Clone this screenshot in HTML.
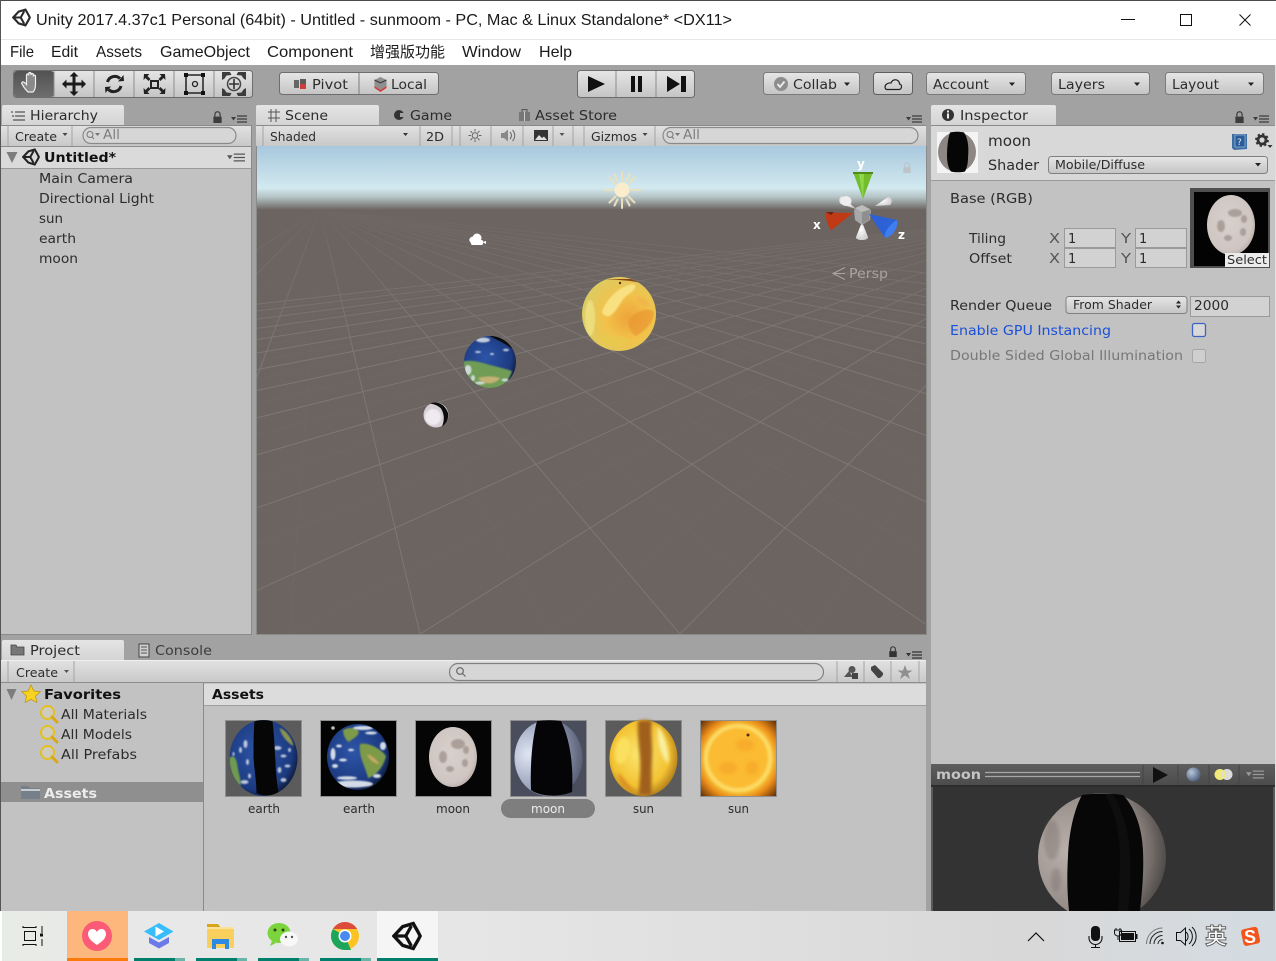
<!DOCTYPE html>
<html><head><meta charset="utf-8"><title>Unity</title>
<style>
html,body{margin:0;padding:0;background:#a2a2a2;overflow:hidden}
svg{display:block;position:absolute;left:0;top:0}
svg.root{filter:blur(.35px)}
text{font-family:"DejaVu Sans","Liberation Sans",sans-serif;font-size:13px;fill:#2c2c2c;white-space:pre}
.w{font-family:"Liberation Sans","Noto Sans CJK SC",sans-serif;font-size:16px;fill:#1a1a1a}
.s{font-size:12px}
.b{font-weight:bold;fill:#111}
.g{fill:#7e7e7e}
</style></head><body>
<svg class="root" width="1276" height="961" viewBox="0 0 1276 961" xmlns="http://www.w3.org/2000/svg">
<defs>
<linearGradient id="btn" x1="0" y1="0" x2="0" y2="1"><stop offset="0" stop-color="#e6e6e6"/><stop offset="1" stop-color="#c4c4c4"/></linearGradient>
<linearGradient id="sel" x1="0" y1="0" x2="0" y2="1"><stop offset="0" stop-color="#525252"/><stop offset="1" stop-color="#6e6e6e"/></linearGradient>
<linearGradient id="bar" x1="0" y1="0" x2="0" y2="1"><stop offset="0" stop-color="#e2e2e2"/><stop offset="1" stop-color="#c8c8c8"/></linearGradient>
<linearGradient id="tab" x1="0" y1="0" x2="0" y2="1"><stop offset="0" stop-color="#e4e4e4"/><stop offset="1" stop-color="#d4d4d4"/></linearGradient>
<linearGradient id="sky" x1="0" y1="0" x2="0" y2="1"><stop offset="0" stop-color="#a8c8de"/><stop offset=".66" stop-color="#d2e9ef"/><stop offset=".8" stop-color="#b4c2c4"/><stop offset="1" stop-color="#6b6461"/></linearGradient>
<linearGradient id="task" x1="0" y1="0" x2="1" y2="0"><stop offset="0" stop-color="#e8ece6"/><stop offset=".1" stop-color="#e8e8e8"/><stop offset=".36" stop-color="#e6e6e6"/><stop offset=".8" stop-color="#d8d8d8"/><stop offset="1" stop-color="#d4dce2"/></linearGradient>
<linearGradient id="prevh" x1="0" y1="0" x2="0" y2="1"><stop offset="0" stop-color="#5e5e5e"/><stop offset="1" stop-color="#4c4c4c"/></linearGradient>
<linearGradient id="fade" gradientUnits="userSpaceOnUse" x1="0" y1="212" x2="0" y2="340"><stop offset="0" stop-color="#222"/><stop offset=".3" stop-color="#777"/><stop offset="1" stop-color="#fff"/></linearGradient>
<mask id="fm" maskUnits="userSpaceOnUse" x="257" y="209" width="669" height="425"><rect x="257" y="209" width="669" height="425" fill="url(#fade)"/></mask>
<radialGradient id="gEarth" cx=".42" cy=".42" r=".62"><stop offset="0" stop-color="#2e55a8"/><stop offset=".8" stop-color="#1c3a80"/><stop offset="1" stop-color="#0e1c3e"/></radialGradient>
<radialGradient id="gSun" cx=".62" cy=".55" r=".62"><stop offset="0" stop-color="#eea43a"/><stop offset=".5" stop-color="#f2c24a"/><stop offset="1" stop-color="#dccb62"/></radialGradient>
<radialGradient id="gSunMat" cx=".45" cy=".45" r=".6"><stop offset="0" stop-color="#fbe870"/><stop offset=".7" stop-color="#f3c232"/><stop offset="1" stop-color="#a87418"/></radialGradient>
<radialGradient id="gSunTex" cx=".5" cy=".5" r=".72"><stop offset="0" stop-color="#fcc840"/><stop offset=".6" stop-color="#fbc83c"/><stop offset=".74" stop-color="#e88a18"/><stop offset="1" stop-color="#4a2006"/></radialGradient>
<radialGradient id="gMoon" cx=".45" cy=".45" r=".6"><stop offset="0" stop-color="#d8d0cc"/><stop offset=".8" stop-color="#cfc6c2"/><stop offset="1" stop-color="#b4aaa6"/></radialGradient>
<radialGradient id="gMoonMat" cx=".2" cy=".45" r=".85"><stop offset="0" stop-color="#dfe5f2"/><stop offset=".55" stop-color="#97a0ba"/><stop offset="1" stop-color="#50566a"/></radialGradient>
<radialGradient id="gPrev" cx=".22" cy=".45" r=".85"><stop offset="0" stop-color="#b9b0ab"/><stop offset=".7" stop-color="#8a817d"/><stop offset="1" stop-color="#3b3836"/></radialGradient>
<radialGradient id="gBall" cx=".35" cy=".35" r=".7"><stop offset="0" stop-color="#b8c6d8"/><stop offset="1" stop-color="#4d5f7c"/></radialGradient>
<radialGradient id="gCap" cx=".4" cy=".4" r=".7"><stop offset="0" stop-color="#fff"/><stop offset="1" stop-color="#c9c9c9"/></radialGradient>
<filter id="bl"><feGaussianBlur stdDeviation=".7"/></filter>
<filter id="bl2"><feGaussianBlur stdDeviation="1.6"/></filter>
<filter id="bl3"><feGaussianBlur stdDeviation=".35"/></filter>
<clipPath id="scn"><rect x="257" y="209" width="669" height="425"/></clipPath>
<clipPath id="prv"><rect x="933" y="787" width="340" height="124"/></clipPath>
<clipPath id="cE"><ellipse cx="38" cy="38" rx="34" ry="38"/></clipPath>
<clipPath id="cEt"><ellipse cx="37" cy="37" rx="31" ry="33"/></clipPath>
<clipPath id="cS"><circle cx="619" cy="314" r="37"/></clipPath>
<clipPath id="cEs"><circle cx="490" cy="362" r="26"/></clipPath>
<symbol id="unity" viewBox="0 0 24 24"><path d="M1.500 12 8.500 4.500 17 2 21 9 22.500 12 21 15 17 22 8.500 19.500Z" fill="none" stroke="currentColor" stroke-width="2.700" stroke-linejoin="miter"/><path d="M2 12H11L15.500 4M11 12l4.500 8" fill="none" stroke="currentColor" stroke-width="2.600"/></symbol>
<symbol id="lock" viewBox="0 0 12 14"><path d="M3.200 6V3.500a2.800 2.800 0 0 1 5.600 0V6" fill="none" stroke="currentColor" stroke-width="1.300"/><rect x="1.500" y="6" width="9" height="7" fill="currentColor"/></symbol>
<symbol id="menu" viewBox="0 0 16 8"><path d="M0 2h5L2.500 5.500Z" fill="currentColor"/><path d="M6 1h10M6 4h10M6 7h10" stroke="currentColor" stroke-width="1.200"/></symbol>
<symbol id="mag" viewBox="0 0 20 20"><circle cx="8.500" cy="8.500" r="6.500" fill="#e8e0b8" fill-opacity=".35" stroke="#e2c020" stroke-width="2"/><path d="M13 13l5 5" stroke="#d8a818" stroke-width="3" stroke-linecap="round"/></symbol>
</defs>

<!-- window -->
<rect width="1276" height="961" fill="#a2a2a2"/>
<rect x="0" y="0" width="1276" height="65" fill="#fff"/>
<rect x="0" y="0" width="1276" height="1" fill="#4a4a4a"/>
<rect x="0" y="39" width="1276" height="1" fill="#e6e6e6"/>
<rect x="0" y="0" width="1" height="911" fill="#555"/>
<rect x="1275" y="65" width="1" height="846" fill="#e0e0e0"/>
<svg x="12" y="8" width="19" height="19" color="#2a2a2a"><use href="#unity" width="19" height="19"/></svg>
<text class="w" x="36" y="25" textLength="696" lengthAdjust="spacingAndGlyphs">Unity 2017.4.37c1 Personal (64bit) - Untitled - sunmoom - PC, Mac &amp; Linux Standalone* &lt;DX11&gt;</text>
<path d="M1121 19.500h14" stroke="#111" stroke-width="1"/>
<rect x="1180.500" y="14.500" width="11" height="11" fill="none" stroke="#111"/>
<path d="M1239.500 14.500 1250.500 25.500M1250.500 14.500 1239.500 25.500" stroke="#111"/>
<text class="w" x="10" y="57" textLength="24" lengthAdjust="spacingAndGlyphs">File</text>
<text class="w" x="51" y="57" textLength="27" lengthAdjust="spacingAndGlyphs">Edit</text>
<text class="w" x="96" y="57" textLength="46" lengthAdjust="spacingAndGlyphs">Assets</text>
<text class="w" x="160" y="57" textLength="90" lengthAdjust="spacingAndGlyphs">GameObject</text>
<text class="w" x="267" y="57" textLength="86" lengthAdjust="spacingAndGlyphs">Component</text>
<text class="w" x="370" y="57" textLength="75" lengthAdjust="spacingAndGlyphs" style="font-size:15px">增强版功能</text>
<text class="w" x="462" y="57" textLength="59" lengthAdjust="spacingAndGlyphs">Window</text>
<text class="w" x="539" y="57" textLength="33" lengthAdjust="spacingAndGlyphs">Help</text>

<!-- tools -->
<rect x="13.500" y="70.500" width="239" height="27" rx="3" fill="url(#btn)" stroke="#6d6d6d"/>
<rect x="14" y="71" width="40" height="26" rx="3" fill="url(#sel)"/>
<path d="M94 71v26M134 71v26M174 71v26M214 71v26M54 71v26" stroke="#8c8c8c"/>
<path d="M28 92c-2-2-5-6-6-8-1-1.500 1-3 2.500-1.500l2 2v-9c0-2 2.200-2 2.200 0v-1.500c0-2 2.300-2 2.300 0v1c0-2 2.300-2 2.300 0v1.500c0-1.800 2.200-1.800 2.200 0v8c0 3-1 6-2.500 7.500z" fill="#8a8a8a" stroke="#f0f0f0" stroke-width="1.200"/>
<path d="M74 72l4.500 4.500h-3v6h6v-3l4.500 4.500-4.500 4.500v-3h-6v6h3l-4.500 4.500-4.500-4.500h3v-6h-6v3l-4.500-4.500 4.500-4.500v3h6v-6h-3z" fill="#1a1a1a"/>
<path d="M107.500 82a7.500 7.500 0 0 1 12.500-3.500M121 86a7.500 7.500 0 0 1-12.500 3.500" fill="none" stroke="#222" stroke-width="3"/><path d="M118 81.500l6-.5-.5-6zM111 86.500l-6 .5.500 6z" fill="#222"/>
<path d="M144 74h5.500l-2 2 3 3-2 2-3-3-2 2zM165 74h-5.500l2 2-3 3 2 2 3-3 2 2zM144 94h5.500l-2-2 3-3-2-2-3 3-2-2zM165 94h-5.500l2-2-3-3 2-2 3 3 2-2z" fill="#222"/><rect x="151" y="81" width="7" height="7" fill="none" stroke="#222" stroke-width="2"/>
<rect x="186" y="75" width="17" height="18" fill="none" stroke="#222" stroke-width="1.500"/><rect x="184" y="73" width="4" height="4" fill="#111"/><rect x="201" y="73" width="4" height="4" fill="#111"/><rect x="184" y="91" width="4" height="4" fill="#111"/><rect x="201" y="91" width="4" height="4" fill="#111"/><circle cx="195" cy="84" r="2.500" fill="none" stroke="#222" stroke-width="1.300"/>
<path d="M222 80v-8h8l1.500 3-5 .5-2 3zM246 80v-8h-8l-1.500 3 5 .5 2 3zM222 88v8h8l1.500-3-5-.5-2-3zM246 88v8h-8l-1.500-3 5-.5 2-3z" fill="#3c3c3c"/><circle cx="234" cy="84" r="6.500" fill="none" stroke="#444" stroke-width="1.500"/><path d="M234 79v10M229 84h10" stroke="#333" stroke-width="1.600"/>

<!-- pivot/local -->
<rect x="279.500" y="72.500" width="159" height="22" rx="3" fill="url(#btn)" stroke="#6d6d6d"/>
<path d="M359 73v21" stroke="#7c7c7c"/>
<rect x="294" y="80" width="5" height="8" fill="#666"/><rect x="300" y="79" width="6" height="10" fill="#cf3c3c"/><rect x="300" y="79" width="6" height="5" fill="#5a5a5a"/>
<text x="312" y="89" textLength="36" lengthAdjust="spacingAndGlyphs">Pivot</text>
<path d="M380.500 77l6 3v6l-6 4-6-4v-6z" fill="#8f8f8f"/><path d="M374.500 86l6 4 6-4v2l-6 4-6-4z" fill="#cc3c3c"/><path d="M374.500 80l6 3 6-3" fill="none" stroke="#333"/>
<text x="391" y="89" textLength="36" lengthAdjust="spacingAndGlyphs">Local</text>

<!-- play -->
<rect x="577.500" y="70.500" width="117" height="27" rx="3" fill="url(#btn)" stroke="#6d6d6d"/>
<path d="M616 71v26M656 71v26" stroke="#8c8c8c"/>
<path d="M588 76l17 8-17 8z" fill="#111"/>
<rect x="631" y="76" width="4" height="16" fill="#111"/><rect x="638" y="76" width="4" height="16" fill="#111"/>
<path d="M667 76l13 8-13 8z" fill="#111"/><rect x="681" y="76" width="5" height="16" fill="#111"/>

<!-- right buttons -->
<rect x="763.500" y="72.500" width="96" height="22" rx="3" fill="url(#btn)" stroke="#7a7a7a"/>
<circle cx="781" cy="84" r="7" fill="#8d8d8d"/><path d="M777.500 84l2.500 3 4.500-5.500" fill="none" stroke="#eee" stroke-width="1.800"/>
<text x="793" y="89" textLength="44" lengthAdjust="spacingAndGlyphs">Collab</text><path d="M844 82.500h6l-3 3.500z" fill="#222"/>
<rect x="873.500" y="72.500" width="39" height="22" rx="3" fill="url(#btn)" stroke="#5f5f5f"/>
<path d="M887 89.500h12c3 0 3.500-5 .5-5.500 0-3-3-5-5.500-4-2 .5-2.500 2-3 3-3-.5-6 1.500-6 4 .2 1.500 1 2.500 2 2.500z" fill="none" stroke="#222" stroke-width="1.200"/>
<rect x="926.500" y="72.500" width="99" height="22" rx="3" fill="url(#btn)" stroke="#7a7a7a"/>
<text x="933" y="89" textLength="56" lengthAdjust="spacingAndGlyphs">Account</text><path d="M1009 82.500h6l-3 3.500z" fill="#222"/>
<rect x="1051.500" y="72.500" width="98" height="22" rx="3" fill="url(#btn)" stroke="#7a7a7a"/>
<text x="1058" y="89" textLength="47" lengthAdjust="spacingAndGlyphs">Layers</text><path d="M1134 82.500h6l-3 3.500z" fill="#222"/>
<rect x="1165.500" y="72.500" width="98" height="22" rx="3" fill="url(#btn)" stroke="#7a7a7a"/>
<text x="1172" y="89" textLength="47" lengthAdjust="spacingAndGlyphs">Layout</text><path d="M1248 82.500h6l-3 3.500z" fill="#222"/>

<!-- hierarchy -->
<rect x="1" y="125" width="250" height="509" fill="#c2c2c2"/>
<rect x="251" y="125" width="1" height="509" fill="#8a8a8a"/>
<rect x="1" y="634" width="251" height="1" fill="#8a8a8a"/>
<path d="M2 125v-18a2 2 0 0 1 2-2h118a2 2 0 0 1 2 2v18z" fill="url(#tab)"/>
<g stroke="#333" stroke-width="1"><path d="M15 112h10M15 116h10M15 120h10"/><path d="M11 112h2M12 116h2M13 120h2"/></g>
<text x="30" y="120" textLength="68" lengthAdjust="spacingAndGlyphs">Hierarchy</text>
<svg x="212" y="111" width="11" height="13" color="#3c3c3c"><use href="#lock" width="11" height="13"/></svg>
<svg x="231" y="115" width="16" height="8" color="#3c3c3c"><use href="#menu" width="16" height="8"/></svg>
<rect x="1" y="125" width="250" height="21" fill="url(#bar)"/><rect x="1" y="125" width="250" height="1" fill="#8a8a8a"/><rect x="1" y="146" width="250" height="1" fill="#8d8d8d"/>
<path d="M8 126v20M72 126v20" stroke="#a4a4a4"/>
<text class="s" x="15" y="141" textLength="42" lengthAdjust="spacingAndGlyphs">Create</text><path d="M62.500 133h5l-2.500 3z" fill="#444"/>
<rect x="83" y="127.500" width="153" height="16" rx="8" fill="#d6d6d6" stroke="#8a8a8a" stroke-width="1.200"/>
<circle cx="90" cy="134.500" r="3" fill="none" stroke="#777"/><path d="M92 137l2 2" stroke="#777"/><path d="M95 133h5l-2.500 3z" fill="#777"/>
<text class="g" x="103" y="139" textLength="17" lengthAdjust="spacingAndGlyphs">All</text>
<rect x="1" y="147" width="250" height="21" fill="#dadada"/><rect x="1" y="168" width="250" height="1" fill="#9a9a9a"/>
<path d="M6.500 152h11l-5.500 11z" fill="#7d7d7d"/>
<svg x="22" y="148" width="18" height="18" color="#222"><use href="#unity" width="18" height="18"/></svg>
<text class="b" x="44" y="162" textLength="72" lengthAdjust="spacingAndGlyphs">Untitled*</text>
<svg x="227" y="153" width="18" height="9" color="#555"><use href="#menu" width="18" height="9"/></svg>
<text x="39" y="183" textLength="94" lengthAdjust="spacingAndGlyphs">Main Camera</text>
<text x="39" y="203" textLength="115" lengthAdjust="spacingAndGlyphs">Directional Light</text>
<text x="39" y="223" textLength="24" lengthAdjust="spacingAndGlyphs">sun</text>
<text x="39" y="243" textLength="37" lengthAdjust="spacingAndGlyphs">earth</text>
<text x="39" y="263" textLength="39" lengthAdjust="spacingAndGlyphs">moon</text>

<!-- scene tabs -->
<path d="M256 125v-18a2 2 0 0 1 2-2h119a2 2 0 0 1 2 2v18z" fill="url(#tab)"/>
<path d="M271 109v13M276 109v13M268 112h12M268 118h12" stroke="#555" stroke-width="1"/>
<text x="285" y="120" textLength="43" lengthAdjust="spacingAndGlyphs">Scene</text>
<circle cx="399" cy="115" r="5" fill="#333"/><path d="M400 113h5v4h-5z" fill="#a2a2a2"/>
<text x="410" y="120" textLength="42" lengthAdjust="spacingAndGlyphs">Game</text>
<rect x="519" y="112" width="11" height="9" fill="#777"/><path d="M522 112v-2.500h5v2.500" fill="none" stroke="#555"/><rect x="524" y="112" width="1" height="9" fill="#ccc"/>
<text x="535" y="120" textLength="82" lengthAdjust="spacingAndGlyphs">Asset Store</text>
<svg x="906" y="115" width="16" height="8" color="#3c3c3c"><use href="#menu" width="16" height="8"/></svg>

<rect x="256" y="125" width="670" height="21" fill="url(#bar)"/><rect x="256" y="125" width="670" height="1" fill="#8a8a8a"/>
<path d="M263 126v20M420 126v20M452 126v20M460 126v20M491 126v20M523 126v20M553 126v20M573 126v20M584 126v20M655 126v20" stroke="#a4a4a4"/>
<text class="s" x="270" y="141" textLength="46" lengthAdjust="spacingAndGlyphs">Shaded</text><path d="M403 133h5l-2.500 3z" fill="#333"/>
<text class="s" x="426" y="141" textLength="18" lengthAdjust="spacingAndGlyphs">2D</text>
<circle cx="475" cy="135.500" r="2.800" fill="none" stroke="#666"/><path d="M475 129v2.500M475 139.500v2.500M468.500 135.500h2.500M479 135.500h2.500M470.500 131l1.800 1.800M477.700 138.300l1.800 1.800M479.500 131l-1.800 1.800M472.300 138.300l-1.800 1.800" stroke="#666"/>
<path d="M501 133h3l4-3.500v12L504 138h-3z" fill="#888"/><path d="M510 132a5 5 0 0 1 0 7M512.500 130a8 8 0 0 1 0 11" fill="none" stroke="#666"/>
<rect x="534" y="130" width="14" height="11" fill="#333"/><path d="M535 140l4-5 3 3 2-1.500 3 3.500z" fill="#ddd"/><path d="M559.500 133h5l-2.500 3z" fill="#555"/>
<text class="s" x="591" y="141" textLength="46" lengthAdjust="spacingAndGlyphs">Gizmos</text><path d="M642.500 133h5l-2.500 3z" fill="#444"/>
<rect x="663" y="127.500" width="255" height="16" rx="8" fill="#d6d6d6" stroke="#8a8a8a" stroke-width="1.200"/>
<circle cx="670" cy="134.500" r="3" fill="none" stroke="#777"/><path d="M672 137l2 2" stroke="#777"/><path d="M675 133h5l-2.500 3z" fill="#777"/>
<text class="g" x="683" y="139" textLength="17" lengthAdjust="spacingAndGlyphs">All</text>

<!-- scene view -->
<rect x="257" y="146" width="669" height="488" fill="#6b6461"/>
<rect x="257" y="146" width="669" height="64" fill="url(#sky)"/>
<rect x="256" y="146" width="1" height="488" fill="#8a8a8a"/>
<rect x="256" y="634" width="671" height="1" fill="#8a8a8a"/>
<rect x="926" y="146" width="1" height="489" fill="#8a8a8a"/>
<g clip-path="url(#scn)"><g mask="url(#fm)" fill="none">
<path stroke="#8a8482" stroke-width="1" opacity=".6" d="M1100 210L-2700 634M1100 210L-2440 634M1100 210L-2180 634M1100 210L-1920 634M1100 210L-1660 634M1100 210L-1400 634M1100 210L-1140 634M1100 210L-880 634M1100 210L-620 634M1100 210L-360 634M1100 210L-100 634M1100 210L160 634M1100 210L420 634M1100 210L680 634M1100 210L940 634M320 210L-360 634M320 210L-100 634M320 210L160 634M320 210L420 634M320 210L680 634M320 210L940 634M320 210L1200 634M320 210L1460 634M320 210L1720 634M320 210L1980 634M320 210L2240 634M320 210L2500 634M320 210L2760 634M320 210L3020 634M320 210L3280 634M320 210L3800 634M320 210L4400 634"/>
<path stroke="#78716e" stroke-width=".8" opacity=".35" d="M1100 210L-2570 634M1100 210L-2310 634M1100 210L-2050 634M1100 210L-1790 634M1100 210L-1530 634M1100 210L-1270 634M1100 210L-1010 634M1100 210L-750 634M1100 210L-490 634M1100 210L-230 634M1100 210L30 634M1100 210L290 634M1100 210L550 634M1100 210L810 634M320 210L-230 634M320 210L30 634M320 210L290 634M320 210L550 634M320 210L810 634M320 210L1070 634M320 210L1330 634M320 210L1590 634M320 210L1850 634M320 210L2110 634M320 210L2370 634M320 210L2630 634M320 210L2890 634M320 210L3150 634"/>
</g></g>

<!-- sun gizmo -->
<circle cx="622" cy="190" r="7.500" fill="#fbeccb"/>
<path d="M622 172v9M622 199v9M604 190h9M631 190h9M609.500 177.500l6 6M628.500 196.500l6 6M634.500 177.500l-6 6M615.500 196.500l-6 6M614.500 174.500l3 6M626.500 199.500l3 6M629.500 174.500l-3 6M617.500 199.500l-3 6" stroke="#eadfbe" stroke-width="2" stroke-linecap="round"/>
<!-- camera gizmo -->
<g fill="#fff" filter="url(#bl3)"><circle cx="477" cy="238" r="4.500"/><circle cx="472.500" cy="240" r="3.200"/><rect x="471" y="240" width="12" height="5" rx="1.500"/><path d="M482 242l4 2v-3z"/></g>
<!-- spheres -->
<circle cx="619" cy="314" r="37" fill="url(#gSun)"/>
<g clip-path="url(#cS)"><g filter="url(#bl)"><path d="M602 312c4-12 16-26 32-28 4 4-2 8-8 12-6 6-8 14-16 20-3 1-6 0-8-4z" fill="#f9e488" opacity=".9"/><path d="M630 318c6-6 18-12 24-6 0 10-8 18-18 24-6-4-10-12-6-18z" fill="#e8942e" opacity=".65"/><path d="M636 296c6 0 12 4 14 10-6 2-12-2-14-10z" fill="#f0b24a" opacity=".7"/><ellipse cx="590" cy="318" rx="5" ry="18" fill="#efe082" opacity=".85"/><path d="M600 334c10 2 20 0 30 6-8 6-20 8-28 2z" fill="#e8c94e" opacity=".8"/></g>
<path d="M605 279h28c4 1 8 2 10 5-10-4-28-4-38-5z" fill="#8a4a18"/></g><circle cx="620" cy="283" r="1.200" fill="#5a2e10"/>
<circle cx="490" cy="362" r="26" fill="url(#gEarth)"/>
<g clip-path="url(#cEs)"><g filter="url(#bl)"><path d="M462 362c8-3 18 0 28 3 8 2 16 4 22 6-3 10-10 19-22 19-14 0-26-12-28-28z" fill="#6f9c56"/><path d="M478 378c8-2 14-2 22 0-4 6-16 8-22 0z" fill="#c4b274"/></g>
<g fill="#dfe6ee" filter="url(#bl)" opacity=".85"><ellipse cx="468" cy="370" rx="3.500" ry="5"/><ellipse cx="483" cy="340" rx="7" ry="2.500"/><ellipse cx="478" cy="352" rx="3" ry="1"/><ellipse cx="492" cy="354" rx="2" ry="1"/><ellipse cx="506" cy="350" rx="3" ry="1.200"/><ellipse cx="505" cy="380" rx="3.500" ry="1.500"/><ellipse cx="480" cy="383" rx="5" ry="1.500"/><ellipse cx="473" cy="378" rx="2" ry="3"/></g>
<path d="M488 335c10-1 24 6 28 18-6-8-18-12-28-18z" fill="#0b0b0b"/></g>
<circle cx="436" cy="415" r="12.500" fill="#d6cfd6"/><circle cx="433" cy="417" r="8" fill="#efeaef" filter="url(#bl)"/>
<path d="M430 403.500c8-3 15 1 18 9.500 1 6-2 11-6 13.500 3-7 2-13-1-18-3-3-6-4-11-5z" fill="#0c0c0c"/>

<!-- orientation gizmo -->
<path d="M842 196c-3 1-4 6-1 8l15 5z" fill="url(#gCap)"/><ellipse cx="846" cy="201" rx="5.500" ry="5" fill="#eee" filter="url(#bl3)"/>
<path d="M875 206L888 197c4 0 5 6 2 8z" fill="url(#gCap)"/>
<path d="M862 222l6 15c1 4-13 4-12 0z" fill="url(#gCap)"/>
<path d="M862 205l9 5-1 10-8 5-7-5-1-10z" fill="#a8a8a8"/><path d="M862 212l8-2-1 10-7 4z" fill="#8f8f8f"/><path d="M855 208l7-3 8 4-8 3z" fill="#bdbdbd"/>
<path d="M853 172h20l-10 27z" fill="#72bd2c"/><path d="M853 172h20v2h-20z" fill="#4f8c1c"/><path d="M863 199l-4-25h5z" fill="#8fd84a"/>
<path d="M853 213l-27-.5c-2 0 1 12 5 18z" fill="#c03a16"/><path d="M826 212h8l-3 3z" fill="#6b2410"/>
<path d="M869 214l28 6c2 5-5 17-12 18z" fill="#2c62d6"/><path d="M897 220c2 6-4 17-12 18-2-5 6-15 12-18z" fill="#3f7ef0"/>
<text class="b" x="857" y="168" style="fill:#fff;font-size:12px">y</text>
<text class="b" x="813" y="229" style="fill:#fff;font-size:12px">x</text>
<text class="b" x="898" y="239" style="fill:#fff;font-size:12px">z</text>
<svg x="902" y="162" width="10" height="12" color="#bcc4c6"><use href="#lock" width="10" height="12"/></svg>
<path d="M845 267.500l-12 6 12 6M845 273.500h-12" fill="none" stroke="#a8a4a2" stroke-width="1"/>
<text x="849" y="278" textLength="39" lengthAdjust="spacingAndGlyphs" style="fill:#a8a4a2">Persp</text>

<!-- inspector -->
<rect x="931" y="125" width="344" height="640" fill="#c2c2c2"/>
<path d="M931 125v-18a2 2 0 0 1 2-2h121a2 2 0 0 1 2 2v18z" fill="url(#tab)"/>
<circle cx="948" cy="115" r="6" fill="#333"/><rect x="947" y="113.500" width="2" height="5" fill="#eee"/><rect x="947" y="110.500" width="2" height="2" fill="#eee"/>
<text x="960" y="120" textLength="68" lengthAdjust="spacingAndGlyphs">Inspector</text>
<svg x="1234" y="111" width="11" height="13" color="#3c3c3c"><use href="#lock" width="11" height="13"/></svg>
<svg x="1253" y="115" width="16" height="8" color="#3c3c3c"><use href="#menu" width="16" height="8"/></svg>
<rect x="931" y="125" width="344" height="55" fill="#d8d8d8"/><rect x="931" y="125" width="344" height="1" fill="#8a8a8a"/><rect x="931" y="180" width="344" height="1" fill="#9a9a9a"/>
<rect x="937" y="132" width="41" height="41" fill="#f4f4f4"/>
<ellipse cx="957" cy="152" rx="19" ry="20" fill="#8d8682"/><path d="M950 132.500c5-1 10-1 14 0 4 6 5 14 4 25 0 6-1 10-3 14-4 1-10 1-14 0-3-4-4-10-4-16 0-9 1-17 3-23z" fill="#060606"/>
<text x="988" y="146" textLength="43" lengthAdjust="spacingAndGlyphs" style="font-size:15px">moon</text>
<text x="988" y="170" textLength="51" lengthAdjust="spacingAndGlyphs" style="font-size:14px">Shader</text>
<rect x="1048.500" y="156.500" width="219" height="17" rx="3" fill="url(#btn)" stroke="#808080"/>
<text class="s" x="1055" y="169" textLength="90" lengthAdjust="spacingAndGlyphs">Mobile/Diffuse</text><path d="M1255 163h6l-3 3.500z" fill="#222"/>
<path d="M1232 134h15v15l-13 1-2-2z" fill="#3a6ea5"/><rect x="1235" y="135" width="10" height="12" fill="#2a5c9a" stroke="#bcd" stroke-width=".6"/><text x="1237" y="145" style="font-size:9px;fill:#dfe8f2">?</text>
<circle cx="1262" cy="140" r="4" fill="none" stroke="#333" stroke-width="2.800"/><circle cx="1262" cy="140" r="6" fill="none" stroke="#333" stroke-width="1.800" stroke-dasharray="2.300 2.400"/><path d="M1267.500 145h5l-2.500 3z" fill="#333"/>

<text x="950" y="203" textLength="83" lengthAdjust="spacingAndGlyphs">Base (RGB)</text>
<rect x="1190" y="188" width="80" height="80" fill="#4f4f4f"/><rect x="1194" y="192" width="74" height="74" fill="#030303"/>
<ellipse cx="1231" cy="225" rx="24" ry="30" fill="url(#gMoon)"/>
<g fill="#a2958f" opacity=".8" filter="url(#bl)"><ellipse cx="1235" cy="213" rx="7" ry="4"/><ellipse cx="1244" cy="219" rx="3" ry="4"/><ellipse cx="1221" cy="226" rx="4" ry="6"/><ellipse cx="1228" cy="238" rx="4" ry="3"/><ellipse cx="1243" cy="232" rx="3" ry="4"/></g>
<rect x="1225" y="253" width="44" height="14" fill="#ececec"/>
<text class="s" x="1227" y="264" textLength="40" lengthAdjust="spacingAndGlyphs">Select</text>
<text x="969" y="243" textLength="37" lengthAdjust="spacingAndGlyphs">Tiling</text>
<text x="969" y="263" textLength="43" lengthAdjust="spacingAndGlyphs">Offset</text>
<text x="1049" y="243" style="fill:#555" textLength="11" lengthAdjust="spacingAndGlyphs">X</text>
<text x="1049" y="263" style="fill:#555" textLength="11" lengthAdjust="spacingAndGlyphs">X</text>
<text x="1121" y="243" style="fill:#555" textLength="10" lengthAdjust="spacingAndGlyphs">Y</text>
<text x="1121" y="263" style="fill:#555" textLength="10" lengthAdjust="spacingAndGlyphs">Y</text>
<g fill="#d2d2d2" stroke="#9a9a9a"><rect x="1064.500" y="228.500" width="51" height="19"/><rect x="1064.500" y="248.500" width="51" height="19"/><rect x="1135.500" y="228.500" width="51" height="19"/><rect x="1135.500" y="248.500" width="51" height="19"/></g>
<text x="1068" y="243">1</text><text x="1068" y="263">1</text><text x="1139" y="243">1</text><text x="1139" y="263">1</text>
<text x="950" y="310" textLength="102" lengthAdjust="spacingAndGlyphs">Render Queue</text>
<rect x="1066" y="296.500" width="121" height="17" rx="3" fill="url(#btn)" stroke="#808080"/>
<text class="s" x="1073" y="309" textLength="79" lengthAdjust="spacingAndGlyphs">From Shader</text><path d="M1176 303.500h5l-2.500-3zM1176 305.500h5l-2.500 3z" fill="#222"/>
<rect x="1190.500" y="296.500" width="79" height="20" fill="#d2d2d2" stroke="#9a9a9a"/>
<text x="1194" y="310" textLength="35" lengthAdjust="spacingAndGlyphs">2000</text>
<text x="950" y="335" textLength="161" lengthAdjust="spacingAndGlyphs" style="fill:#1a50d8">Enable GPU Instancing</text>
<rect x="1192.500" y="323.500" width="13" height="13" rx="2" fill="#d8d8d8" stroke="#3c62c4" stroke-width="1.300"/>
<text x="950" y="360" textLength="233" lengthAdjust="spacingAndGlyphs" style="fill:#777">Double Sided Global Illumination</text>
<rect x="1192.500" y="349.500" width="13" height="13" rx="2" fill="#cfcfcf" stroke="#a6a6a6"/>

<!-- preview -->
<rect x="931" y="764" width="344" height="147" fill="#5a5a5a"/>
<rect x="931" y="764" width="344" height="21" fill="url(#prevh)"/>
<rect x="931" y="785" width="344" height="2" fill="#2c2c2c"/>
<rect x="933" y="787" width="340" height="124" fill="#333"/>
<text class="b" x="936" y="779" textLength="45" lengthAdjust="spacingAndGlyphs" style="fill:#c4c4c4">moon</text>
<path d="M985 772.500h155M985 776.500h155" stroke="#a8a8a8" stroke-width="1.200"/>
<path d="M1143 765v20M1178 765v20M1209 765v20M1239 765v20" stroke="#444"/>
<path d="M1153 767l15 8-15 8z" fill="#111"/>
<circle cx="1193.500" cy="774.500" r="7" fill="url(#gBall)"/>
<circle cx="1220" cy="774.500" r="5.500" fill="#f0e878"/><circle cx="1227" cy="774.500" r="5.500" fill="#dcdcdc"/><path d="M1223.500 770a5.500 5.500 0 0 1 0 9" fill="#f0e878"/>
<svg x="1246" y="770" width="18" height="9" color="#9a9a9a"><use href="#menu" width="18" height="9"/></svg>
<g clip-path="url(#prv)">
<circle cx="1102" cy="857" r="64" fill="url(#gPrev)"/>
<g filter="url(#bl2)" fill="#7a716d" opacity=".4"><ellipse cx="1052" cy="840" rx="8" ry="20"/><ellipse cx="1056" cy="880" rx="5" ry="12"/><ellipse cx="1148" cy="850" rx="5" ry="18"/></g>
<path d="M1082 795c14-2 28-2 41 0 10 10 19 30 20 56 1 22-1 40-3 60h-71c-2-20-2-36-1-55 1-24 6-46 14-61z" fill="#070707"/>
<path d="M1105 794c8 14 14 32 15 60 0 20-1 40-2 57h10c2-20 3-38 2-56-1-24-8-46-17-61z" fill="#0e0e0e"/>
</g>

<!-- project -->
<rect x="1" y="660" width="925" height="251" fill="#c2c2c2"/>
<path d="M2 660v-18a2 2 0 0 1 2-2h118a2 2 0 0 1 2 2v18z" fill="url(#tab)"/>
<path d="M11 645h5l1 2h7v8H11z" fill="#777" stroke="#444" stroke-width=".8"/>
<text x="30" y="655" textLength="50" lengthAdjust="spacingAndGlyphs">Project</text>
<rect x="139" y="644" width="10" height="13" fill="#d0d0d0" stroke="#444"/><path d="M141 647h6M141 650h6M141 653h6" stroke="#555"/>
<text x="155" y="655" textLength="57" lengthAdjust="spacingAndGlyphs" style="fill:#3c3c3c">Console</text>
<svg x="888" y="646" width="10" height="12" color="#333"><use href="#lock" width="10" height="12"/></svg>
<svg x="906" y="651" width="16" height="8" color="#333"><use href="#menu" width="16" height="8"/></svg>
<rect x="1" y="660" width="925" height="23" fill="url(#bar)"/><rect x="1" y="660" width="925" height="1" fill="#f0f0f0"/><rect x="1" y="682" width="925" height="1" fill="#8d8d8d"/>
<path d="M8 661v21M74 661v21M837 661v21M864 661v21M891 661v21M919 661v21" stroke="#a4a4a4"/>
<text class="s" x="16" y="677" textLength="42" lengthAdjust="spacingAndGlyphs">Create</text><path d="M64 670h5l-2.500 3z" fill="#555"/>
<rect x="449.500" y="663.500" width="374" height="17" rx="8.500" fill="#d6d6d6" stroke="#808080" stroke-width="1.200"/>
<circle cx="460" cy="671" r="3.300" fill="none" stroke="#666" stroke-width="1.200"/><path d="M462.500 673.500l3 3" stroke="#666" stroke-width="1.200"/>
<path d="M844 677l5-6 4 6z" fill="#555"/><circle cx="852" cy="669.500" r="3.500" fill="#555"/><rect x="852" y="673" width="6" height="6" fill="#444"/>
<path d="M871 667l4-2 8 8c1 2-3 6-5 5l-7-8z" fill="#444"/>
<path d="M905 665l2 5.500h5.500l-4.500 3 2 5.500-5-3.500-5 3.500 2-5.500-4.500-3h5.500z" fill="#8f8f8f"/>

<!-- favorites -->
<rect x="203" y="683" width="1" height="228" fill="#8a8a8a"/>
<rect x="204" y="684" width="722" height="21" fill="#dcdcdc"/><rect x="204" y="705" width="722" height="1" fill="#a0a0a0"/>
<text class="b" x="212" y="699" textLength="52" lengthAdjust="spacingAndGlyphs">Assets</text>
<path d="M6.500 689h10l-5 11z" fill="#7d7d7d"/>
<path d="M31 685l2.800 6 6.500.7-4.800 4.400 1.300 6.400-5.800-3.200-5.800 3.200 1.300-6.400-4.800-4.400 6.500-.7z" fill="#f7d21e" stroke="#b89018" stroke-width=".7"/>
<text class="b" x="44" y="699" textLength="77" lengthAdjust="spacingAndGlyphs">Favorites</text>
<svg x="39" y="704" width="20" height="20"><use href="#mag" width="20" height="20"/></svg>
<svg x="39" y="724" width="20" height="20"><use href="#mag" width="20" height="20"/></svg>
<svg x="39" y="744" width="20" height="20"><use href="#mag" width="20" height="20"/></svg>
<text x="61" y="719" textLength="86" lengthAdjust="spacingAndGlyphs">All Materials</text>
<text x="61" y="739" textLength="71" lengthAdjust="spacingAndGlyphs">All Models</text>
<text x="61" y="759" textLength="76" lengthAdjust="spacingAndGlyphs">All Prefabs</text>
<rect x="1" y="782" width="202" height="20" fill="#8f8f8f"/>
<path d="M21 786h7l2 2h10v11H21z" fill="#76808a"/><path d="M21 790h19" stroke="#c8ccd0" stroke-width="2"/>
<text class="b" x="44" y="798" textLength="53" lengthAdjust="spacingAndGlyphs" style="fill:#ececec">Assets</text>

<!-- thumbs -->
<g>
<rect x="225.500" y="720.500" width="76" height="76" fill="#5b5b5b" stroke="#8f8f8f"/>
<g transform="translate(225.500 720)">
<ellipse cx="38" cy="38" rx="34" ry="38" fill="url(#gEarth)"/>
<g clip-path="url(#cE)"><g filter="url(#bl)"><path d="M4 38c4-4 7 0 8 8s4 14 3 20c-6-4-12-16-11-28z" fill="#6f9a50"/><path d="M54 8c6 2 12 9 14 18-6-3-12-10-14-18z" fill="#8a9350"/></g><g fill="#dfe6ee" filter="url(#bl)" opacity=".8"><ellipse cx="52" cy="28" rx="4" ry="2"/><ellipse cx="58" cy="36" rx="3" ry="1.500"/><ellipse cx="62" cy="46" rx="3" ry="1.500"/><ellipse cx="54" cy="50" rx="2" ry="3"/><ellipse cx="19" cy="62" rx="4" ry="2"/><ellipse cx="24" cy="56" rx="1.500" ry="2.500"/><ellipse cx="58" cy="60" rx="3" ry="2"/><ellipse cx="20" cy="24" rx="2" ry="4"/><ellipse cx="15" cy="30" rx="1.500" ry="3"/><ellipse cx="22" cy="42" rx="1.500" ry="3"/><ellipse cx="8" cy="34" rx="1" ry="2"/><ellipse cx="64" cy="30" rx="1.500" ry="2"/></g>
<path d="M29 1c6-1 13-1 18 0 2 16 2 28 3 40 0 12 2 24 3 32-6 3-16 3-22 0 0-10-2-22-3-35 0-14 0-26 1-37z" fill="#060606"/></g>
</g>
<rect x="320.500" y="720.500" width="76" height="76" fill="#030303" stroke="#8f8f8f"/>
<g transform="translate(321 720)">
<ellipse cx="37" cy="37" rx="31" ry="33" fill="url(#gEarth)"/>
<g clip-path="url(#cEt)"><g filter="url(#bl)"><path d="M22 10c8-4 14-2 16 2-2 6-6 6-10 10-4-2-6-8-6-12zM39 24c8-2 20 4 26 12-2 10-10 20-18 22-2-10-10-22-8-34z" fill="#7d9a48"/><path d="M46 34c6 2 10 6 12 10-4 0-10-4-12-10z" fill="#c4a860"/></g><g fill="#e8eef2" filter="url(#bl)" opacity=".9"><ellipse cx="32" cy="64" rx="20" ry="3.500"/><ellipse cx="26" cy="58" rx="10" ry="1.800"/><ellipse cx="12" cy="34" rx="2.500" ry="6"/><ellipse cx="18" cy="26" rx="3" ry="1.500"/><ellipse cx="22" cy="40" rx="4" ry="1.500"/><ellipse cx="14" cy="46" rx="3" ry="2"/><ellipse cx="42" cy="8" rx="10" ry="2"/><ellipse cx="50" cy="13" rx="6" ry="1.500"/><ellipse cx="62" cy="26" rx="3" ry="4"/><ellipse cx="30" cy="30" rx="3" ry="1.200"/><ellipse cx="56" cy="56" rx="4" ry="2"/></g></g>
<circle cx="12" cy="8" r="1.800" fill="#bbb"/>
</g>
<rect x="415.500" y="720.500" width="76" height="76" fill="#050505" stroke="#8f8f8f"/>
<ellipse cx="453" cy="757" rx="24" ry="30" fill="url(#gMoon)"/>
<g fill="#a2958f" opacity=".8" filter="url(#bl)"><ellipse cx="458" cy="744" rx="7" ry="5"/><ellipse cx="466" cy="750" rx="3" ry="4"/><ellipse cx="443" cy="757" rx="4" ry="6"/><ellipse cx="450" cy="769" rx="4" ry="3"/><ellipse cx="465" cy="763" rx="3" ry="4"/></g>
<rect x="510.500" y="720.500" width="76" height="76" fill="#4a4e5c" stroke="#8f8f8f"/>
<ellipse cx="548.500" cy="758" rx="34" ry="38" fill="url(#gMoonMat)"/>
<path d="M537 721C545 720 553 720 561 721 568 735 574 760 572 792 560 797 540 797 531 790 530 765 532 740 537 721Z" fill="#050508"/>
<rect x="605.500" y="720.500" width="76" height="76" fill="#5b5b5b" stroke="#8f8f8f"/>
<ellipse cx="643.500" cy="758" rx="34" ry="38" fill="url(#gSunMat)"/>
<g filter="url(#bl2)"><path d="M638 721c4-1 10-1 14 0-2 10 1 22 0 38-1 14 0 26-1 36h-12c0-10 2-22 1-36-1-14-3-28-2-38z" fill="#a0601a"/><path d="M658 726c6 8 12 24 10 38-6-6-12-22-10-38z" fill="#f8f0a0"/><path d="M618 742c5-8 10-6 12 4-2 12-5 18-12 18-4-6-4-14 0-22z" fill="#fbe060"/><path d="M618 772c6 6 10 14 18 20-10-2-18-10-18-20z" fill="#d88a20"/></g>
<rect x="700.500" y="720.500" width="76" height="76" fill="url(#gSunTex)" stroke="#8f8f8f"/>
<circle cx="738" cy="758" r="31" fill="#fbbb32" filter="url(#bl2)"/>
<circle cx="738" cy="758" r="32" fill="none" stroke="#fde884" stroke-width="2.500" filter="url(#bl2)"/>
<g fill="#f4a228" opacity=".55" filter="url(#bl2)"><ellipse cx="745" cy="745" rx="9" ry="6"/><ellipse cx="728" cy="768" rx="9" ry="6"/><ellipse cx="752" cy="768" rx="6" ry="7"/></g>
<circle cx="748" cy="735" r="1.500" fill="#5a2e10"/>
</g>
<rect x="501" y="799" width="94" height="19" rx="9.500" fill="#7e7e7e"/>
<g class="s" style="font-size:12px">
<text class="s" x="248" y="813" textLength="32" lengthAdjust="spacingAndGlyphs">earth</text>
<text class="s" x="343" y="813" textLength="32" lengthAdjust="spacingAndGlyphs">earth</text>
<text class="s" x="436" y="813" textLength="34" lengthAdjust="spacingAndGlyphs">moon</text>
<text class="s" x="531" y="813" textLength="34" lengthAdjust="spacingAndGlyphs" style="fill:#ececec">moon</text>
<text class="s" x="633" y="813" textLength="21" lengthAdjust="spacingAndGlyphs">sun</text>
<text class="s" x="728" y="813" textLength="21" lengthAdjust="spacingAndGlyphs">sun</text>
</g>

<!-- taskbar -->
<rect x="0" y="911" width="1276" height="50" fill="url(#task)"/>
<rect x="0" y="911" width="2" height="50" fill="#fff"/>
<rect x="67" y="911" width="61" height="47" fill="#fdb77c"/><rect x="67" y="958" width="61" height="3" fill="#fb7a0c"/>
<rect x="377" y="911" width="61" height="47" fill="#f5f5f5"/>
<g fill="#00806c"><rect x="134" y="958" width="41" height="3"/><rect x="196" y="958" width="41" height="3"/><rect x="258" y="958" width="41" height="3"/><rect x="320" y="958" width="41" height="3"/><rect x="377" y="958" width="61" height="3"/></g>
<g fill="#6bb5a8"><rect x="175" y="958" width="10" height="3"/><rect x="237" y="958" width="10" height="3"/><rect x="299" y="958" width="10" height="3"/><rect x="361" y="958" width="10" height="3"/></g>
<!-- task view -->
<rect x="24.500" y="931.500" width="11" height="9" fill="none" stroke="#111"/><path d="M23 927.500h13M23 944.500h13M23 926v2M36 926v2M23 944v2M36 944v2M42 926v7M42 939v7" stroke="#111"/><rect x="40" y="933.500" width="3" height="3" fill="#111"/>
<!-- heart -->
<circle cx="97" cy="936" r="15" fill="#fb5b76"/>
<path d="M97 945c-4-3-9-6-9-11 0-3 2-5 4.500-5 2 0 3.500 1 4.500 3 1-2 2.500-3 4.500-3 2.500 0 4.500 2 4.500 5 0 5-5 8-9 11z" fill="#fff"/>
<!-- diamond -->
<path d="M159 923l14.500 8.500-14.500 8.500-15-8.500z" fill="#37bdfb"/><path d="M149 937l10 5.500 10-5.500v6l-10 5.500-10-5.500z" fill="#6c7ae8"/><path d="M155.500 926.500l8.500 5-8.500 5z" fill="#fff"/>
<!-- folder -->
<path d="M207 924h11l2 3h14v21h-27z" fill="#f9cf5e"/><path d="M207 924h11l3 4h-14z" fill="#d8a51a"/><rect x="207" y="927" width="27" height="2" fill="#fbe29a"/>
<path d="M212 949v-10h17v10h-4v-5h-9v5z" fill="#2d8ae0"/>
<!-- wechat -->
<ellipse cx="279" cy="933" rx="11.500" ry="10" fill="#7bd43c"/><path d="M272 941l-2 5 6-3z" fill="#7bd43c"/>
<circle cx="275" cy="930" r="1.500" fill="#2a4418"/><circle cx="283" cy="930" r="1.500" fill="#2a4418"/>
<ellipse cx="289" cy="939" rx="9" ry="7.500" fill="#f7f7f7"/><circle cx="286" cy="937" r="1.200" fill="#555"/><circle cx="292" cy="937" r="1.200" fill="#555"/>
<!-- chrome -->
<circle cx="345" cy="936" r="14" fill="#fbc423"/>
<path d="M332.900 929A14 14 0 0 1 357.100 929H345Z" fill="#dd4b3c"/><path d="M332.900 929 345 936 351 950 345 950A14 14 0 0 1 332.900 929Z" fill="#1da55a"/>
<circle cx="345" cy="936" r="6.500" fill="#fff"/><circle cx="345" cy="936" r="5" fill="#4a8bf0"/>
<!-- unity -->
<svg x="392" y="921" width="30" height="30" color="#111"><use href="#unity" width="30" height="30"/></svg>
<!-- tray -->
<path d="M1028 941l8-8 8 8" fill="none" stroke="#111" stroke-width="1.200"/>
<rect x="1091" y="926" width="9" height="15" rx="4" fill="#111"/><path d="M1089 936v2a6.500 6.500 0 0 0 13 0v-2M1095.500 945v2M1091 947.500h9" fill="none" stroke="#111" stroke-width="1.100"/>
<rect x="1119.500" y="931.500" width="16" height="10" fill="none" stroke="#111"/><rect x="1121" y="933" width="13" height="7" fill="#111"/><rect x="1136" y="934" width="1.500" height="5" fill="#111"/><path d="M1116 930v-2M1120 930v-2M1114.500 930h7v3c0 2-2 3-3.500 3s-3.500-1-3.500-3zM1118 936v4" fill="none" stroke="#111"/>
<circle cx="1162.500" cy="943" r="1.300" fill="#111"/><path d="M1150 944a12.500 12.500 0 0 1 12.500-12.500M1154 944a8.500 8.500 0 0 1 8.500-8.500M1158 944a4.500 4.500 0 0 1 4.500-4.500" fill="none" stroke="#222" stroke-width="1"/><path d="M1146.500 944a16 16 0 0 1 16-16" fill="none" stroke="#777"/>
<path d="M1176.500 932.500h4l5-4.500v17l-5-4.500h-4z" fill="none" stroke="#111"/><path d="M1188 932a6 6 0 0 1 0 9M1191 929a10 10 0 0 1 0 15M1194 927a13 13 0 0 1 0 19" fill="none" stroke="#111" transform="translate(-2 0)"/>
<text x="1205" y="944" style="font-family:'Noto Sans CJK SC','WenQuanYi Zen Hei',sans-serif;font-size:22px;font-weight:bold;fill:#fafafa;stroke:#5a5a5a;stroke-width:.9">英</text>
<rect x="1242" y="928" width="17" height="17" rx="3" fill="#f2561d" transform="rotate(-12 1250 936)"/>
<text x="1244" y="943" style="font-family:'Liberation Sans',sans-serif;font-weight:bold;font-size:18px;fill:#fff">S</text>
</svg>
</body></html>
